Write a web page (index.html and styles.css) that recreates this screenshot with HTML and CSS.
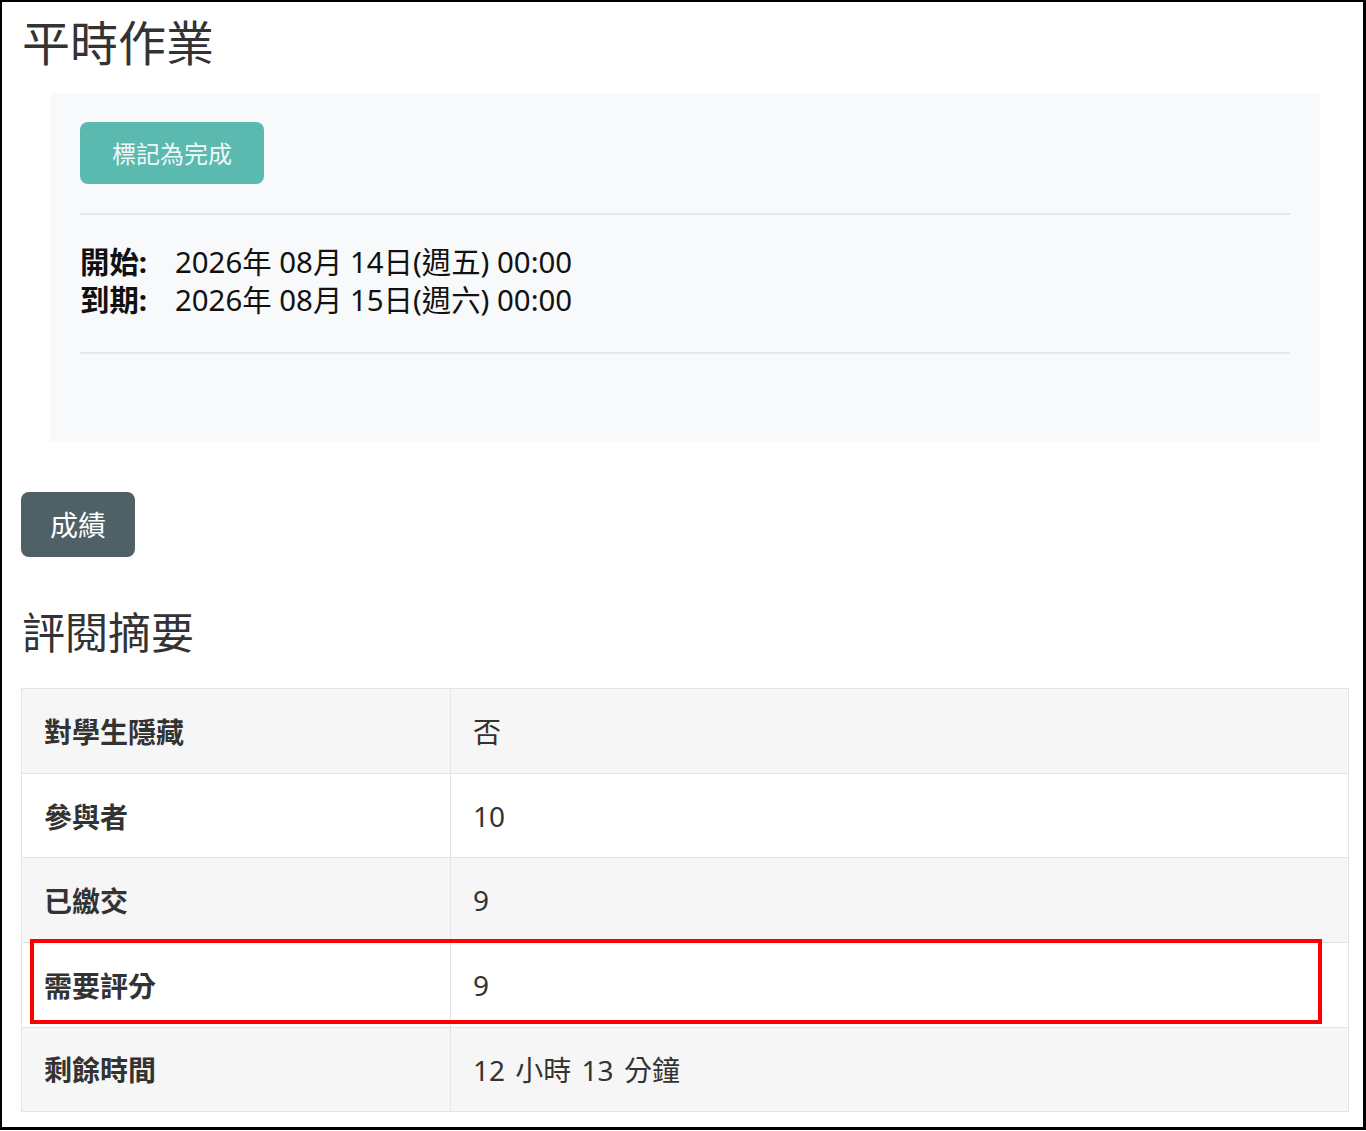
FILE: index.html
```html
<!DOCTYPE html>
<html lang="zh-Hant">
<head>
  <meta charset="UTF-8" />
  <title>平時作業</title>
  <meta name="viewport" content="width=device-width, initial-scale=1.0" />
  <link rel="stylesheet" href="styles.css">
</head>
<body>

<div class="frame">
  <h1 class="page-title">平時作業</h1>

  <div class="activity-panel">
    <button class="done-btn">標記為完成</button>
    <hr>
    <div class="dates">
      <div class="date-row"><strong>開始:</strong><span>2026年 08月 14日(週五) 00:00</span></div>
      <div class="date-row"><strong>到期:</strong><span>2026年 08月 15日(週六) 00:00</span></div>
    </div>
    <hr>
  </div>

  <button class="grade-btn">成績</button>

  <h2 class="section-title">評閱摘要</h2>

  <div class="summary-wrap">
    <table class="summary">
      <tbody>
        <tr>
          <th>對學生隱藏</th>
          <td>否</td>
        </tr>
        <tr>
          <th>參與者</th>
          <td>10</td>
        </tr>
        <tr>
          <th>已繳交</th>
          <td>9</td>
        </tr>
        <tr>
          <th>需要評分</th>
          <td>9</td>
        </tr>
        <tr>
          <th>剩餘時間</th>
          <td>12 小時 13 分鐘</td>
        </tr>
      </tbody>
    </table>
    <!-- 標示需要評分的那一列 -->
    <div class="row-mark"></div>
  </div>
</div>

</body>
</html>
```

FILE: styles.css
```css
body {
  margin: 0;
  font-family: "Noto Sans", "Noto Sans CJK TC", sans-serif;
  background-color: #fff;
  color: #333;
}
.frame {
  box-sizing: border-box;
  width: 1366px;
  height: 1130px;
  border: solid #000;
  border-width: 2px 3px 3px 2px;
  padding: 0 14px 0 19px;
}
.page-title {
  margin: 12px 0 21px 1px;
  font-size: 48px;
  line-height: 1.2;
  font-weight: normal;
  color: #333;
}
.activity-panel {
  margin: 0 29px;
  padding: 29px 30px 88px;
  background-color: #f8f9fa;
}
.done-btn {
  display: block;
  height: 62px;
  padding: 0 32px;
  background-color: #5bbaaf;
  color: #f0f8f7;
  border: none;
  border-radius: 8px;
  font-family: inherit;
  font-size: 24px;
  cursor: pointer;
}
hr {
  margin: 29px 0 0;
  border: none;
  border-top: 2px solid #e5e6e8;
}
.dates {
  margin: 28px 0 33px;
  font-size: 29.4px;
  line-height: 38px;
  color: #111;
}
.date-row {
  display: flex;
}
.date-row strong {
  width: 95px;
}
.grade-btn {
  display: block;
  margin-top: 50px;
  height: 65px;
  padding: 0 29px;
  background-color: #4f6067;
  color: #fff;
  border: none;
  border-radius: 8px;
  font-family: inherit;
  font-size: 28px;
  cursor: pointer;
}
.section-title {
  margin: 50px 0 30px 1px;
  font-size: 43px;
  line-height: 1.2;
  font-weight: normal;
  color: #333;
}
.summary-wrap {
  position: relative;
}
.summary {
  width: 100%;
  border-collapse: collapse;
  font-size: 28px;
}
.summary th,
.summary td {
  height: 83.6px;
  padding: 0 22px;
  text-align: left;
  border: 1px solid #e2e4e7;
}
.summary th {
  width: 384px;
  font-weight: bold;
}
.summary td {
  word-spacing: 3px;
}
.summary tr:nth-child(odd) {
  background-color: #f6f6f6;
}
.row-mark {
  position: absolute;
  top: 251px;
  left: 9px;
  box-sizing: border-box;
  width: 1292px;
  height: 85px;
  border: 4px solid #ff0000;
  pointer-events: none;
}
```
